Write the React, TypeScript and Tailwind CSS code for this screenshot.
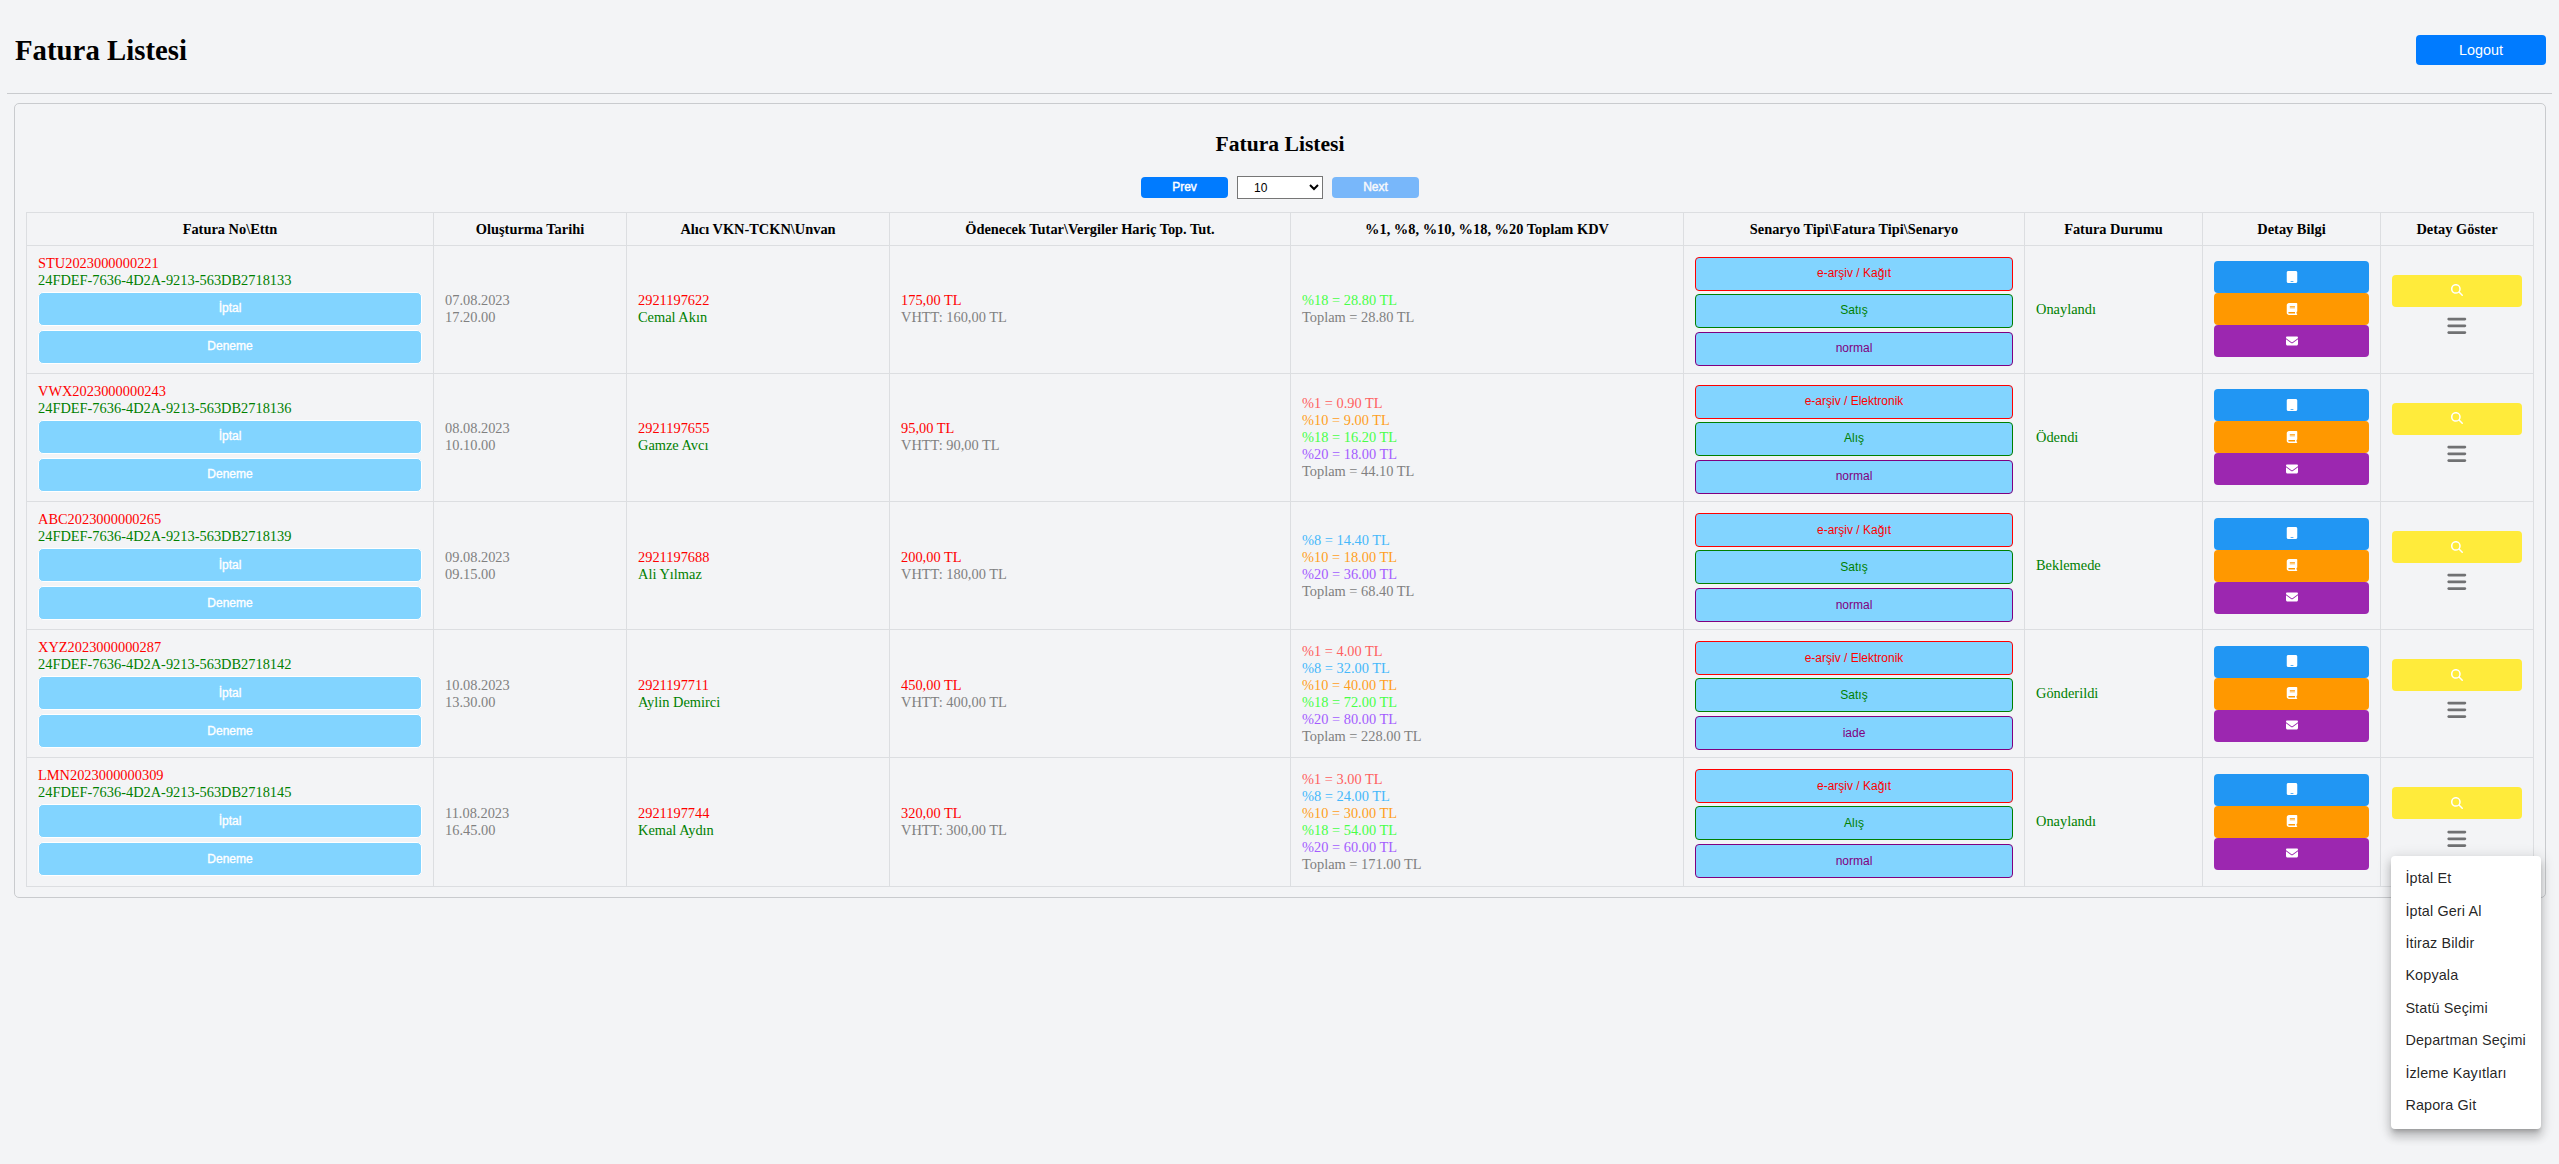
import { FaBars, FaBook, FaEnvelope, FaMagnifyingGlass, FaTablet } from "react-icons/fa6";

type Invoice = {
  no: string;
  ettn: string;
  date: string;
  time: string;
  vkn: string;
  name: string;
  total: string;
  net: string;
  taxes: [string, string][];
  sum: string;
  kind: string;
  type: string;
  scenario: string;
  status: string;
};

const taxColor: Record<string, string> = {
  "%1": "text-[#ff5f5f]",
  "%8": "text-[#45b8fb]",
  "%10": "text-[#ff9f1c]",
  "%18": "text-[#47ff47]",
  "%20": "text-[#a35cff]",
};

const invoices: Invoice[] = [
  {
    no: "STU2023000000221", ettn: "24FDEF-7636-4D2A-9213-563DB2718133",
    date: "07.08.2023", time: "17.20.00", vkn: "2921197622", name: "Cemal Akın",
    total: "175,00", net: "160,00", taxes: [["%18", "28.80"]], sum: "28.80",
    kind: "e-arşiv / Kağıt", type: "Satış", scenario: "normal", status: "Onaylandı",
  },
  {
    no: "VWX2023000000243", ettn: "24FDEF-7636-4D2A-9213-563DB2718136",
    date: "08.08.2023", time: "10.10.00", vkn: "2921197655", name: "Gamze Avcı",
    total: "95,00", net: "90,00",
    taxes: [["%1", "0.90"], ["%10", "9.00"], ["%18", "16.20"], ["%20", "18.00"]], sum: "44.10",
    kind: "e-arşiv / Elektronik", type: "Alış", scenario: "normal", status: "Ödendi",
  },
  {
    no: "ABC2023000000265", ettn: "24FDEF-7636-4D2A-9213-563DB2718139",
    date: "09.08.2023", time: "09.15.00", vkn: "2921197688", name: "Ali Yılmaz",
    total: "200,00", net: "180,00",
    taxes: [["%8", "14.40"], ["%10", "18.00"], ["%20", "36.00"]], sum: "68.40",
    kind: "e-arşiv / Kağıt", type: "Satış", scenario: "normal", status: "Beklemede",
  },
  {
    no: "XYZ2023000000287", ettn: "24FDEF-7636-4D2A-9213-563DB2718142",
    date: "10.08.2023", time: "13.30.00", vkn: "2921197711", name: "Aylin Demirci",
    total: "450,00", net: "400,00",
    taxes: [["%1", "4.00"], ["%8", "32.00"], ["%10", "40.00"], ["%18", "72.00"], ["%20", "80.00"]], sum: "228.00",
    kind: "e-arşiv / Elektronik", type: "Satış", scenario: "iade", status: "Gönderildi",
  },
  {
    no: "LMN2023000000309", ettn: "24FDEF-7636-4D2A-9213-563DB2718145",
    date: "11.08.2023", time: "16.45.00", vkn: "2921197744", name: "Kemal Aydın",
    total: "320,00", net: "300,00",
    taxes: [["%1", "3.00"], ["%8", "24.00"], ["%10", "30.00"], ["%18", "54.00"], ["%20", "60.00"]], sum: "171.00",
    kind: "e-arşiv / Kağıt", type: "Alış", scenario: "normal", status: "Onaylandı",
  },
];

const headers = [
  "Fatura No\\Ettn",
  "Oluşturma Tarihi",
  "Alıcı VKN-TCKN\\Unvan",
  "Ödenecek Tutar\\Vergiler Hariç Top. Tut.",
  "%1, %8, %10, %18, %20 Toplam KDV",
  "Senaryo Tipi\\Fatura Tipi\\Senaryo",
  "Fatura Durumu",
  "Detay Bilgi",
  "Detay Göster",
];

const menuItems = [
  "İptal Et", "İptal Geri Al", "İtiraz Bildir", "Kopyala",
  "Statü Seçimi", "Departman Seçimi", "İzleme Kayıtları", "Rapora Git",
];

const cell = "border-r border-b border-[#dcdee1] p-0 px-[11px] align-middle";
const sans = "font-['Liberation_Sans',Arial,sans-serif]";

function RowMenu() {
  return (
    <ul className={`${sans} absolute left-[10px] top-[97.4px] z-10 w-[150px] rounded-[4px] bg-white py-[7.2px] text-[14.4px] tracking-[0.135px] text-black/87 shadow-[0_4.5px_4.5px_-2.7px_rgba(0,0,0,0.2),0_7.2px_9px_0.9px_rgba(0,0,0,0.14),0_2.7px_12.6px_1.8px_rgba(0,0,0,0.12)]`}>
      {menuItems.map((item) => (
        <li key={item} className="h-[32.4px] px-[14.4px] py-[5.4px] leading-[21.6px] whitespace-nowrap">{item}</li>
      ))}
    </ul>
  );
}

function InvoiceRow({ inv, last }: { inv: Invoice; last: boolean }) {
  const tag = `${sans} flex h-[34px] w-full items-center justify-center rounded-[4px] border bg-[#82d4ff] text-[12px]`;
  const action = `${sans} flex h-[34px] w-full items-center justify-center rounded-[5px] border border-white bg-[#82d4ff] text-[12px] text-white [-webkit-text-stroke:0.35px_white]`;
  const detail = "flex h-8 w-full items-center justify-center rounded-[4px] pb-px text-[12px] text-white";
  return (
    <tr className="h-[128.2px]">
      <td className={cell}>
        <div className="text-[red]">{inv.no}</div>
        <div className="text-[green]">{inv.ettn}</div>
        <div className="mt-[3px] flex flex-col gap-1">
          <button className={action}>İptal</button>
          <button className={action}>Deneme</button>
        </div>
      </td>
      <td className={`${cell} text-[gray]`}>
        <div>{inv.date}</div>
        <div>{inv.time}</div>
      </td>
      <td className={cell}>
        <div className="text-[red]">{inv.vkn}</div>
        <div className="text-[green]">{inv.name}</div>
      </td>
      <td className={cell}>
        <div className="text-[red]">{inv.total} TL</div>
        <div className="text-[gray]">VHTT: {inv.net} TL</div>
      </td>
      <td className={cell}>
        {inv.taxes.map(([rate, amount]) => (
          <div key={rate} className={taxColor[rate]}>{rate} = {amount} TL</div>
        ))}
        <div className="text-[gray]">Toplam = {inv.sum} TL</div>
      </td>
      <td className={cell}>
        <div className="flex flex-col pt-1">
          <button className={`${tag} border-[red] text-[red]`}>{inv.kind}</button>
          <button className={`${tag} mt-[3px] border-[green] text-[green]`}>{inv.type}</button>
          <button className={`${tag} mt-1 border-[purple] text-[purple]`}>{inv.scenario}</button>
        </div>
      </td>
      <td className={`${cell} text-[green]`}>{inv.status}</td>
      <td className={cell}>
        <button className={`${detail} bg-[#2196f3]`}><FaTablet /></button>
        <button className={`${detail} bg-[#ff9800]`}><FaBook /></button>
        <button className={`${detail} bg-[#9c27b0]`}><FaEnvelope /></button>
      </td>
      <td className={`${cell} relative`}>
        <div className="pb-[7px]">
          <button className={`${detail} bg-[#ffeb3b]`}><FaMagnifyingGlass /></button>
          <button className="mx-auto mt-2 flex h-[22px] w-[22px] items-center justify-center text-[21.6px] text-[#707173]"><FaBars /></button>
        </div>
        {last && <RowMenu />}
      </td>
    </tr>
  );
}

export default function App() {
  return (
    <div className="min-h-screen bg-[#f3f4f6] px-[7px] font-['Liberation_Serif','Times_New_Roman',serif] text-[14.4px] leading-[17px] text-black">
      <header className="flex h-[94px] items-center justify-between border-b border-[#c9cbce] pr-[6px] pl-2">
        <h1 className="pt-2 text-[28.8px] leading-[33px] font-bold">Fatura Listesi</h1>
        <button className={`${sans} mt-[7px] h-[30px] w-[130px] rounded-[4px] bg-[#007bff] text-[14.4px] text-white`}>Logout</button>
      </header>
      <main className="mx-[7px] mt-[9px] h-[795px] w-[2532px] rounded-[5px] border border-[#c9cbce] px-[11px]">
        <h2 className="mt-[28px] text-center text-[21.6px] leading-[25px] font-bold">Fatura Listesi</h2>
        <div className={`${sans} mt-[19px] flex items-center justify-center gap-[9px] text-[12px]`}>
          <button className="h-[21px] w-[87px] rounded-[4px] bg-[#007bff] pb-px text-white [-webkit-text-stroke:0.4px_white]">Prev</button>
          <select defaultValue="10" className="h-[23px] w-[86px] border border-[#767676] bg-white pl-[9px] indent-[3px] text-black">
            <option>10</option>
            <option>20</option>
            <option>50</option>
          </select>
          <button className="h-[21px] w-[87px] rounded-[4px] bg-[#007bff] pb-px text-white opacity-50 [-webkit-text-stroke:0.4px_white]">Next</button>
        </div>
        <table className="mt-[13px] w-[2508px] table-fixed border-separate border-spacing-0 border-t border-l border-[#dcdee1]">
          <colgroup>
            <col className="w-[407px]" />
            <col className="w-[193px]" />
            <col className="w-[263px]" />
            <col className="w-[401px]" />
            <col className="w-[393px]" />
            <col className="w-[341px]" />
            <col className="w-[178px]" />
            <col className="w-[178px]" />
            <col className="w-[153px]" />
          </colgroup>
          <thead>
            <tr className="h-[32.6px]">
              {headers.map((h) => (
                <th key={h} className="border-r border-b border-[#dcdee1] px-[11px] pt-px pb-0 text-center align-middle font-bold">{h}</th>
              ))}
            </tr>
          </thead>
          <tbody>
            {invoices.map((inv, i) => (
              <InvoiceRow key={inv.no} inv={inv} last={i === invoices.length - 1} />
            ))}
          </tbody>
        </table>
      </main>
    </div>
  );
}
